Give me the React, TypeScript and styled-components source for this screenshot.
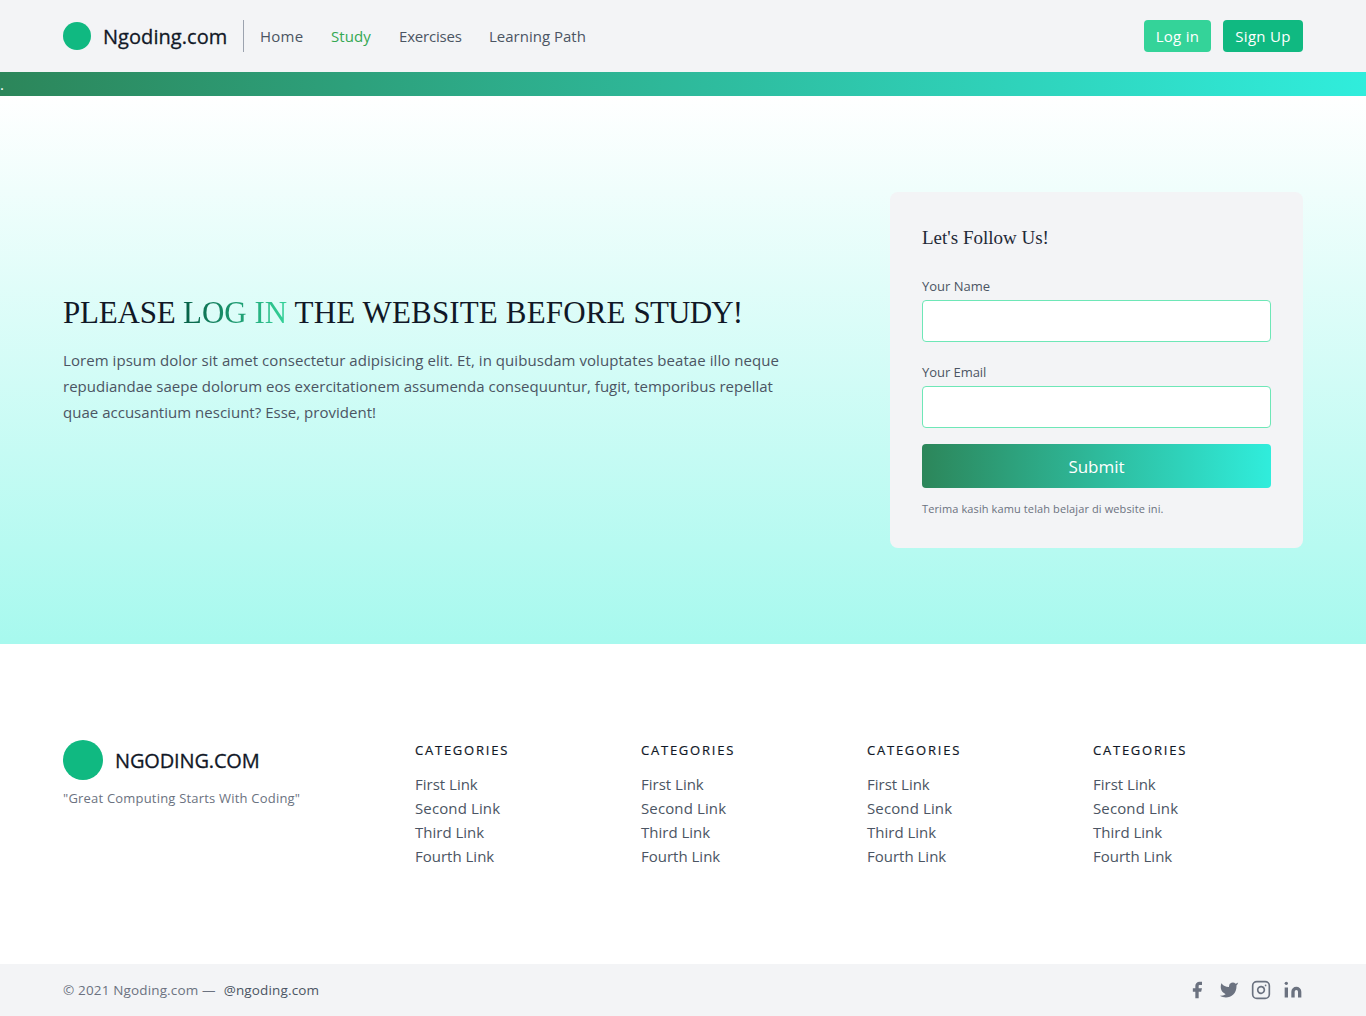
import React from "react";
import styled, { createGlobalStyle } from "styled-components";

const GlobalStyle = createGlobalStyle`
  *, *::before, *::after { box-sizing: border-box; }
  body {
    margin: 0;
    background: #fff;
    color: #4b5563;
    font-family: "Open Sans", "Noto Sans", sans-serif;
    font-size: 15px;
    line-height: 24px;
  }
  h1, h2, p, nav, ul { margin: 0; padding: 0; font-weight: 400; }
  ul { list-style: none; }
  a { color: inherit; text-decoration: none; }
`;

const brandGradient = "linear-gradient(to right, #2c865a, #30eddc)";

type TextProps = { $track?: number };

const Container = styled.div`
  width: 1280px;
  max-width: 100%;
  margin: 0 auto;
  padding: 0 20px;
  display: flex;
`;

const Header = styled.header`
  background: #f3f4f6;
  height: 72px;
`;
const HeaderRow = styled(Container)`
  height: 72px;
  align-items: center;
`;
const Brand = styled.a`
  display: flex;
  align-items: center;
  gap: 12px;
  color: #111827;
`;
const Dot = styled.span<{ $size: number }>`
  width: ${(p) => p.$size}px;
  height: ${(p) => p.$size}px;
  border-radius: 50%;
  background: #10b981;
  flex: none;
`;
const BrandName = styled.span<{ $width: number } & TextProps>`
  width: ${(p) => p.$width}px;
  padding-top: 1px;
  font-size: 20px;
  line-height: 27px;
  white-space: nowrap;
  -webkit-text-stroke: 0.3px currentColor;
  letter-spacing: ${(p) => p.$track ?? 0}px;
`;
const Nav = styled.nav`
  display: flex;
  height: 32px;
  align-items: center;
  margin-left: 16px;
  padding-left: 16px;
  border-left: 1px solid #9ca3af;
`;
const NavLink = styled.a<{ $width: number; $active?: boolean } & TextProps>`
  width: ${(p) => p.$width}px;
  margin-right: 28px;
  white-space: nowrap;
  color: ${(p) => (p.$active ? "#34a853" : "#4b5563")};
  letter-spacing: ${(p) => p.$track ?? 0}px;
`;
const Actions = styled.div`
  display: flex;
  gap: 12px;
  margin-left: auto;
`;
const ActionButton = styled.button<{ $width: number; $color: string } & TextProps>`
  width: ${(p) => p.$width}px;
  height: 32px;
  padding: 0;
  border: 0;
  border-radius: 4px;
  background: ${(p) => p.$color};
  color: #fff;
  font: inherit;
  white-space: nowrap;
  letter-spacing: ${(p) => p.$track ?? 0}px;
`;

const Strip = styled.div`
  height: 24px;
  background: ${brandGradient};
  color: #fff;
`;

const Hero = styled.section`
  height: 548px;
  padding: 96px 0;
  background: linear-gradient(to bottom, #ffffff, #a7f9ee);
`;
const HeroRow = styled(Container)`
  align-items: center;
`;
const Intro = styled.div`
  width: 744px;
  padding-bottom: 22px;
`;
const Title = styled.h1`
  font-family: "Liberation Serif", serif;
  font-size: 31px;
  line-height: 40px;
  color: #111827;
  white-space: nowrap;
`;
const Tracked = styled.span<TextProps>`
  letter-spacing: ${(p) => p.$track ?? 0}px;
`;
const Accent = styled(Tracked)`
  background: linear-gradient(to right, #065f46, #34d399);
  -webkit-background-clip: text;
  background-clip: text;
  color: transparent;
`;
const Lead = styled.p`
  margin-top: 14px;
  line-height: 26px;
`;
const Line = styled(Tracked)`
  display: block;
  white-space: nowrap;
`;

const Card = styled.form`
  width: 413px;
  height: 356px;
  margin-left: auto;
  padding: 32px;
  border-radius: 8px;
  background: #f3f4f6;
  display: flex;
  flex-direction: column;
`;
const CardTitle = styled.h2`
  margin-bottom: 20px;
  font-family: "Liberation Serif", serif;
  font-size: 19px;
  line-height: 28px;
  color: #1f2937;
`;
const Field = styled.label<TextProps>`
  display: flex;
  flex-direction: column;
  margin-bottom: 16px;
  font-size: 13px;
  line-height: 28px;
  letter-spacing: ${(p) => p.$track ?? 0}px;
`;
const Input = styled.input`
  height: 42px;
  border: 1px solid #6ee7b7;
  border-radius: 4px;
  background: #fff;
`;
const Submit = styled.button`
  flex: none;
  height: 44px;
  padding: 1px 0 0;
  border: 0;
  border-radius: 4px;
  background: ${brandGradient};
  color: #fff;
  font: inherit;
  font-size: 17px;
  line-height: 28px;
`;
const Note = styled.p<TextProps>`
  margin-top: 13px;
  font-size: 11px;
  line-height: 16px;
  color: #6b7280;
  letter-spacing: ${(p) => p.$track ?? 0}px;
`;

const FooterRow = styled(Container)`
  height: 320px;
  padding-top: 96px;
`;
const FooterBrand = styled.div`
  width: 256px;
`;
const Motto = styled.p<TextProps>`
  margin-top: 8px;
  font-size: 13px;
  line-height: 20px;
  color: #6b7280;
  white-space: nowrap;
  letter-spacing: ${(p) => p.$track ?? 0}px;
`;
const Columns = styled.div`
  flex: 1;
  padding-left: 80px;
  display: grid;
  grid-template-columns: repeat(4, 1fr);
`;
const Column = styled.div`
  padding: 0 16px;
`;
const ColumnTitle = styled.h2<TextProps>`
  margin-bottom: 12px;
  font-size: 13px;
  line-height: 20px;
  color: #111827;
  -webkit-text-stroke: 0.2px currentColor;
  letter-spacing: ${(p) => p.$track ?? 0}px;
`;
const LinkItem = styled.li<TextProps>`
  letter-spacing: ${(p) => p.$track ?? 0}px;
`;

const Bottom = styled.div`
  height: 52px;
  background: #f3f4f6;
`;
const BottomRow = styled(Container)`
  height: 52px;
  align-items: center;
  justify-content: space-between;
`;
const Copyright = styled.p<TextProps>`
  display: flex;
  font-size: 13.5px;
  line-height: 20px;
  color: #6b7280;
  letter-spacing: ${(p) => p.$track ?? 0}px;
`;
const Handle = styled.a`
  margin-left: 8px;
  color: #4b5563;
`;
const Socials = styled.div`
  display: flex;
  gap: 12px;
  color: #6b7280;
`;
const Icon = styled.svg`
  width: 20px;
  height: 20px;
  display: block;
  stroke-linecap: round;
  stroke-linejoin: round;
`;

const links = [
  { label: "First Link", track: 0 },
  { label: "Second Link", track: 0.12 },
  { label: "Third Link", track: 0 },
  { label: "Fourth Link", track: 0 },
];

export default function App() {
  return (
    <>
      <GlobalStyle />
      <Header>
        <HeaderRow>
          <Brand href="#">
            <Dot $size={28} />
            <BrandName $width={124} $track={0.05}>Ngoding.com</BrandName>
          </Brand>
          <Nav>
            <NavLink href="#" $width={43} $track={0.25}>Home</NavLink>
            <NavLink href="#" $width={40} $track={0.1} $active>Study</NavLink>
            <NavLink href="#" $width={62} $track={-0.2}>Exercises</NavLink>
            <NavLink href="#" $width={97}>Learning Path</NavLink>
          </Nav>
          <Actions>
            <ActionButton $width={67} $color="#34d399" $track={0.3}>Log in</ActionButton>
            <ActionButton $width={80} $color="#10b981" $track={0.3}>Sign Up</ActionButton>
          </Actions>
        </HeaderRow>
      </Header>
      <Strip>.</Strip>
      <Hero>
        <HeroRow>
          <Intro>
            <Title>
              <Tracked $track={-0.2}>PLEASE </Tracked>
              <Accent $track={0}>LOG IN</Accent>
              <Tracked $track={0.15}> THE WEBSITE BEFORE </Tracked>
              <Tracked $track={-0.8}>STUDY!</Tracked>
            </Title>
            <Lead>
              <Line $track={0.063}>Lorem ipsum dolor sit amet consectetur adipisicing elit. Et, in quibusdam voluptates beatae illo neque</Line>
              <Line $track={0.008}>repudiandae saepe dolorum eos exercitationem assumenda consequuntur, fugit, temporibus repellat</Line>
              <Line $track={0.02}>quae accusantium nesciunt? Esse, provident!</Line>
            </Lead>
          </Intro>
          <Card onSubmit={(e) => e.preventDefault()}>
            <CardTitle>Let's Follow Us!</CardTitle>
            <Field>
              Your Name
              <Input type="text" />
            </Field>
            <Field $track={-0.05}>
              Your Email
              <Input type="email" />
            </Field>
            <Submit>Submit</Submit>
            <Note $track={0.11}>Terima kasih kamu telah belajar di website ini.</Note>
          </Card>
        </HeroRow>
      </Hero>
      <footer>
        <FooterRow>
          <FooterBrand>
            <Brand href="#">
              <Dot $size={40} />
              <BrandName $width={144} $track={-0.15}>NGODING.COM</BrandName>
            </Brand>
            <Motto $track={0.2}>"Great Computing Starts With Coding"</Motto>
          </FooterBrand>
          <Columns>
            {[0, 1, 2, 3].map((i) => (
              <Column key={i}>
                <ColumnTitle $track={1.77}>CATEGORIES</ColumnTitle>
                <ul>
                  {links.map((l) => (
                    <LinkItem key={l.label} $track={l.track}>
                      <a href="#">{l.label}</a>
                    </LinkItem>
                  ))}
                </ul>
              </Column>
            ))}
          </Columns>
        </FooterRow>
        <Bottom>
          <BottomRow>
            <Copyright $track={0.15}>
              © 2021 Ngoding.com —<Handle href="#">@ngoding.com</Handle>
            </Copyright>
            <Socials>
              <Icon viewBox="0 0 24 24" fill="currentColor">
                <path d="M18 2h-3a5 5 0 00-5 5v3H7v4h3v8h4v-8h3l1-4h-4V7a1 1 0 011-1h3z" />
              </Icon>
              <Icon viewBox="0 0 24 24" fill="currentColor">
                <path d="M23 3a10.9 10.9 0 01-3.14 1.53 4.48 4.48 0 00-7.86 3v1A10.66 10.66 0 013 4s-4 9 5 13a11.64 11.64 0 01-7 2c9 5 20 0 20-11.5a4.5 4.5 0 00-.08-.83A7.72 7.72 0 0023 3z" />
              </Icon>
              <Icon viewBox="0 0 24 24" fill="none" stroke="currentColor" strokeWidth={2}>
                <rect width="20" height="20" x="2" y="2" rx="5" ry="5" />
                <path d="M16 11.37A4 4 0 1112.63 8 4 4 0 0116 11.37zm1.5-4.87h.01" />
              </Icon>
              <Icon viewBox="0 0 24 24" fill="currentColor">
                <path d="M16 8a6 6 0 016 6v7h-4v-7a2 2 0 00-2-2 2 2 0 00-2 2v7h-4v-7a6 6 0 016-6zM2 9h4v12H2z" />
                <circle cx="4" cy="4" r="2" />
              </Icon>
            </Socials>
          </BottomRow>
        </Bottom>
      </footer>
    </>
  );
}
